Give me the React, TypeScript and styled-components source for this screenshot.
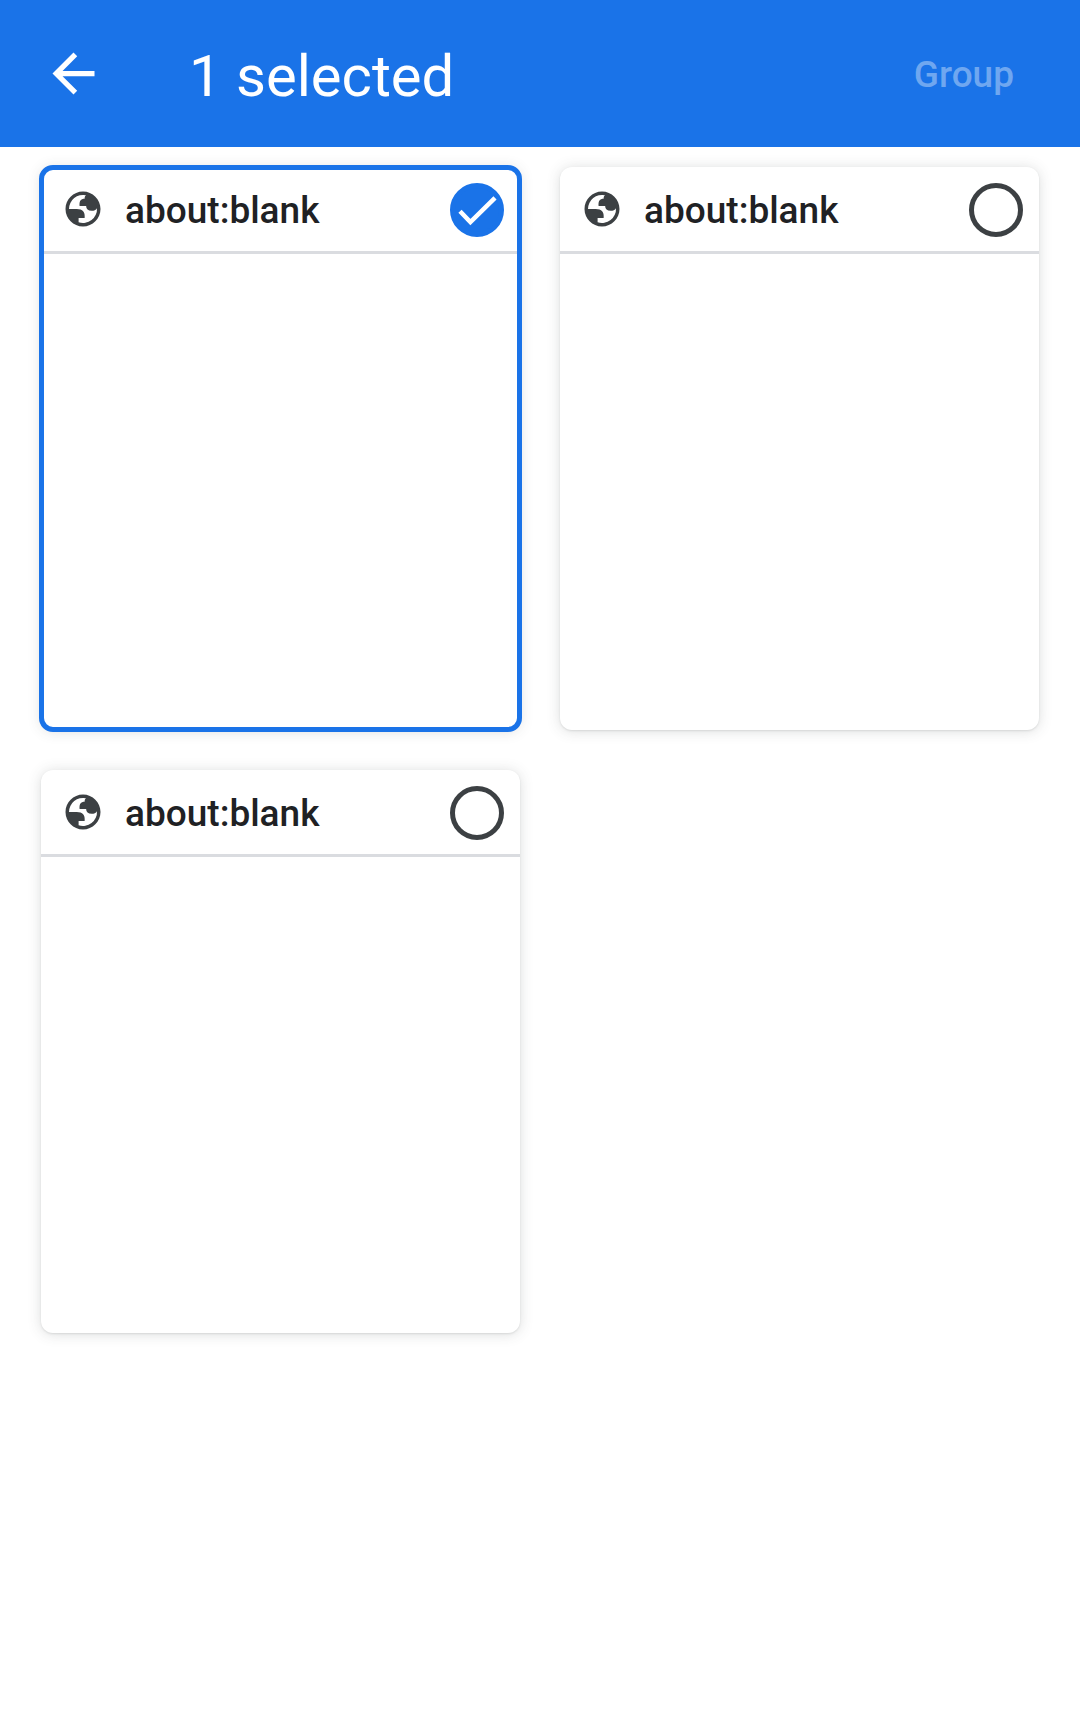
import React, { useState } from "react";
import styled, { createGlobalStyle } from "styled-components";

const GlobalStyle = createGlobalStyle`
  *, *::before, *::after { box-sizing: border-box; }
  body {
    margin: 0;
    background: #fff;
    font-family: Roboto, "Noto Sans", sans-serif;
  }
`;

const Toolbar = styled.header`
  display: flex;
  align-items: center;
  height: 147px;
  padding: 0 66px 0 42px;
  background: #1a73e8;
  color: #fff;
`;

const BackButton = styled.button`
  display: flex;
  padding: 0;
  border: 0;
  background: none;
  color: inherit;
  cursor: pointer;
`;

const Title = styled.h1`
  flex: 1;
  margin: 0;
  padding: 4px 0 0 84px;
  font-size: 58px;
  font-weight: 400;
  line-height: 68px;
`;

const GroupButton = styled.button`
  padding: 2px 0 0;
  border: 0;
  background: none;
  color: #fff;
  font: 500 37px/44px Roboto, "Noto Sans", sans-serif;

  &:disabled {
    color: rgba(255, 255, 255, 0.38);
  }
`;

const Grid = styled.main`
  display: grid;
  grid-template-columns: repeat(2, 1fr);
  gap: 40px;
  padding: 20px 41px;
`;

const Card = styled.label<{ $selected: boolean }>`
  display: block;
  aspect-ratio: 479 / 563;
  border-radius: 12px;
  background: #fff;
  box-shadow: 0 1px 2px rgba(60, 64, 67, 0.12), 0 1px 14px rgba(60, 64, 67, 0.18);
  outline: ${(p) => (p.$selected ? "5px solid #1a73e8" : "none")};
  outline-offset: -3px;
  cursor: pointer;
`;

const CardHeader = styled.div`
  display: flex;
  align-items: center;
  height: 87px;
  padding: 2px 16px 0 21px;
  border-bottom: 3px solid #dadce0;
  color: #3c4043;
`;

const CardTitle = styled.span`
  flex: 1;
  padding: 2px 0 0 21px;
  color: #202124;
  font-size: 37px;
  font-weight: 500;
  line-height: 44px;
`;

const Favicon = styled.svg`
  width: 42px;
  height: 42px;
  margin-bottom: 2px;
`;

const Toggle = styled.span`
  display: grid;
  width: 54px;
  height: 54px;

  > * {
    grid-area: 1 / 1;
  }
`;

const Checkbox = styled.input`
  width: 54px;
  height: 54px;
  margin: 0;
  appearance: none;
  border: 5px solid #3c4043;
  border-radius: 50%;
  cursor: pointer;

  &:checked {
    border-color: #1a73e8;
    background: #1a73e8;
  }
`;

const CheckMark = styled.svg`
  z-index: 1;
  pointer-events: none;
`;

function Globe() {
  return (
    <Favicon viewBox="0 0 24 24" fill="currentColor" fillRule="evenodd" aria-hidden="true">
      <path d="M12,2C6.48,2 2,6.48 2,12s4.48,10 10,10 10,-4.48 10,-10S17.52,2 12,2zM4,12h4.4c3.407,0.022 4.922,1.73 4.543,5.127H9.488v2.47a8.004,8.004 0,0 0,10.498 -8.083C19.327,12.504 18.332,13 17,13c-2.137,0 -3.206,-0.916 -3.206,-2.75h-3.748c-0.274,-2.728 0.683,-4.092 2.87,-4.092 0,-0.975 0.327,-1.597 0.811,-1.97A8.004,8.004 0,0 0,4 12z" />
    </Favicon>
  );
}

const tabs = ["about:blank", "about:blank", "about:blank"];

export default function App() {
  const [selected, setSelected] = useState([true, false, false]);
  const count = selected.filter(Boolean).length;
  const toggle = (index: number) =>
    setSelected((prev) => prev.map((value, i) => (i === index ? !value : value)));

  return (
    <>
      <GlobalStyle />
      <Toolbar>
        <BackButton type="button" aria-label="Back">
          <svg width="63" height="63" viewBox="0 0 24 24" fill="currentColor" aria-hidden="true">
            <path d="M20 11H7.83l5.59-5.59L12 4l-8 8 8 8 1.41-1.41L7.83 13H20v-2z" />
          </svg>
        </BackButton>
        <Title>{`${count} selected`}</Title>
        <GroupButton type="button" disabled={count < 2}>
          Group
        </GroupButton>
      </Toolbar>
      <Grid>
        {tabs.map((title, index) => (
          <Card key={index} $selected={selected[index]}>
            <CardHeader>
              <Globe />
              <CardTitle>{title}</CardTitle>
              <Toggle>
                <Checkbox
                  type="checkbox"
                  checked={selected[index]}
                  onChange={() => toggle(index)}
                />
                {selected[index] && (
                  <CheckMark width="54" height="54" viewBox="0 0 54 54" fill="none" aria-hidden="true">
                    <path d="M10 28.3 20.4 39 45 14.8" stroke="#fff" strokeWidth="4.5" />
                  </CheckMark>
                )}
              </Toggle>
            </CardHeader>
          </Card>
        ))}
      </Grid>
    </>
  );
}
